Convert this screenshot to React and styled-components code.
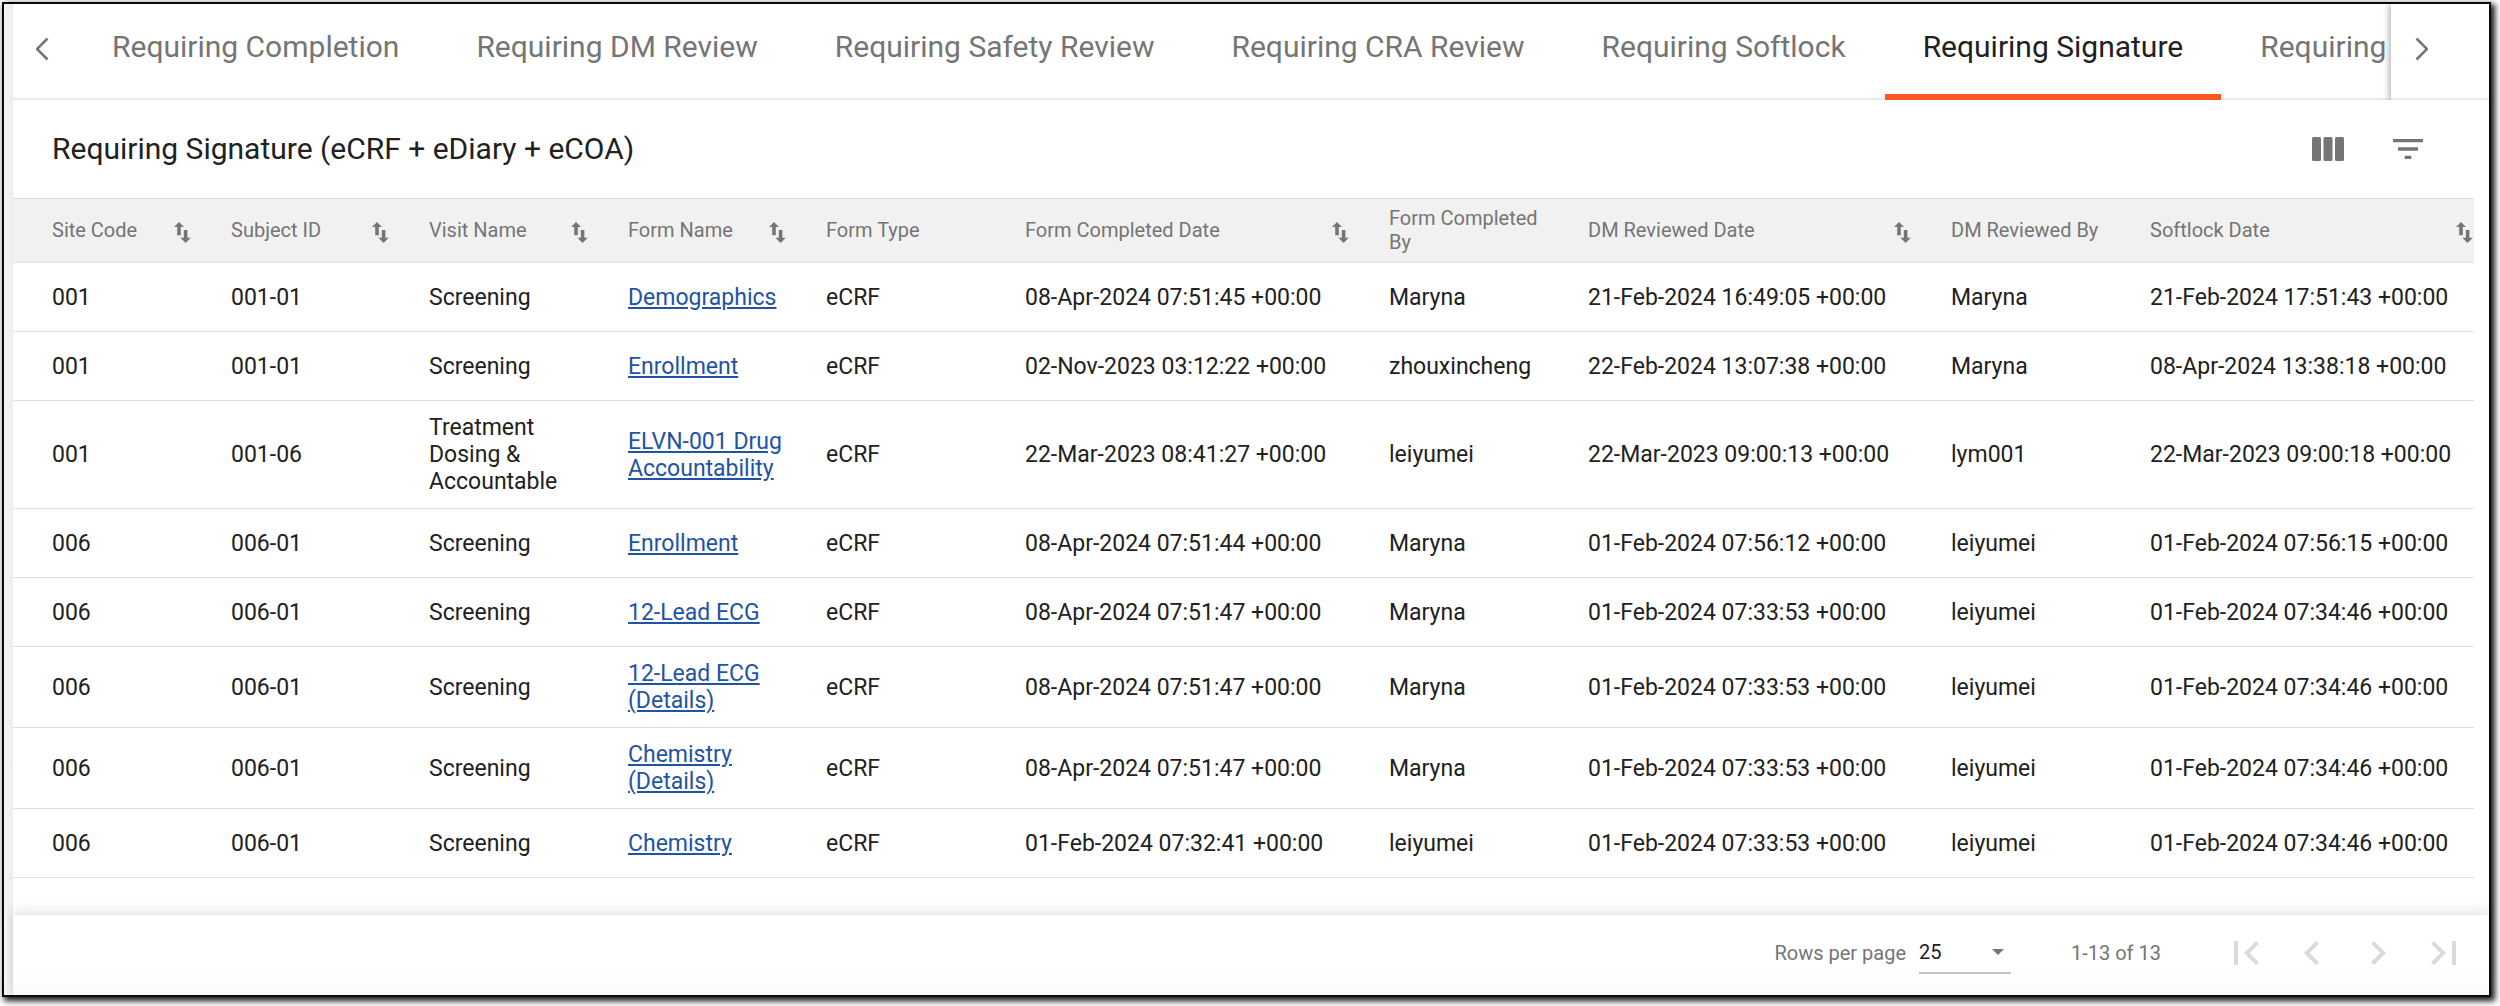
import React, { useState } from "react";
import styled, { createGlobalStyle } from "styled-components";

const GlobalStyle = createGlobalStyle`
  * { box-sizing: border-box; }
  body {
    margin: 0;
    background: #fff;
    color: #212121;
    font-family: Roboto, "Liberation Sans", sans-serif;
  }
  button, select { font: inherit; color: inherit; }
`;

const Page = styled.div`
  display: flex;
  min-height: 100vh;
  padding: 2px 9px 9px 2px;
`;

const Frame = styled.main`
  display: flex;
  flex: 1;
  min-width: 0;
  padding-left: 9px;
  border: 2px solid #0a0a0a;
  background: linear-gradient(90deg, #f8f8f8, #ececec) left / 9px 100% no-repeat #fff;
  box-shadow: 3px 3px 6px 1px rgba(0, 0, 0, 0.9);
`;

const Content = styled.div`
  display: flex;
  flex: 1;
  flex-direction: column;
  min-width: 0;
  background: #fff;
`;

const TabBar = styled.nav`
  display: flex;
  height: 96px;
  border-bottom: 2px solid #e8e8e8;
`;

const TabList = styled.div`
  display: flex;
  flex: 1;
  gap: 1px;
  min-width: 0;
  height: 96px;
  padding-left: 2px;
  overflow: hidden;
`;

const Tab = styled.button`
  flex: none;
  height: 96px;
  padding: 0 38px 4px;
  border: 0;
  border-bottom: 6px solid ${(p) => (p.$active ? "#ff5722" : "transparent")};
  background: none;
  color: ${(p) => (p.$active ? "#212121" : "#757575")};
  font-size: 30px;
  font-weight: 400;
  line-height: 36px;
  white-space: nowrap;
  cursor: pointer;
`;

const IconButton = styled.button`
  display: flex;
  flex: none;
  align-items: center;
  justify-content: center;
  padding: 0;
  border: 0;
  background: none;
  color: ${(p) => p.$color || "#757575"};
  cursor: pointer;
  svg { display: block; }
`;

const ScrollButton = styled(IconButton)`
  width: 59px;
  height: 90px;
`;

const ScrollEnd = styled.div`
  position: relative;
  display: flex;
  flex: none;
  width: 98px;
  height: 96px;
  box-shadow: -2px 0 6px rgba(0, 0, 0, 0.3);
  clip-path: inset(0 0 0 -16px);
`;

const TitleBar = styled.header`
  display: flex;
  align-items: center;
  justify-content: space-between;
  height: 98px;
  padding: 0 61px 0 39px;
`;

const Title = styled.h1`
  margin: 0;
  font-size: 30px;
  font-weight: 400;
  line-height: 36px;
`;

const Actions = styled.div`
  display: flex;
  gap: 40px;
`;

const TableArea = styled.section`
  flex: 1;
  margin-right: 15px;
  overflow: hidden;
`;

const Table = styled.table`
  width: 2500px;
  table-layout: fixed;
  border-collapse: separate;
  border-spacing: 0;
`;

const HeadCell = styled.th`
  height: 65px;
  padding: 0 40px 1px 0;
  border-top: 1px solid #e0e0e0;
  border-bottom: 1px solid #e0e0e0;
  background: #f1f1f1;
  color: #757575;
  font-size: 20px;
  font-weight: 400;
  line-height: 24px;
  text-align: left;
  &:first-child { padding-left: 39px; }
`;

const HeadContent = styled.div`
  display: flex;
  align-items: center;
  justify-content: space-between;
  white-space: ${(p) => (p.$sortable ? "nowrap" : "normal")};
`;

const Cell = styled.td`
  height: 69px;
  padding: 13px 40px 13px 0;
  border-bottom: 1px solid #e0e0e0;
  font-size: 23px;
  line-height: 27px;
  &:first-child { padding-left: 39px; }
  &.date { padding-right: 32px; white-space: nowrap; }
`;

const FormLink = styled.a`
  color: #1f53a5;
  text-decoration: underline;
`;

const Footer = styled.footer`
  display: flex;
  align-items: center;
  justify-content: flex-end;
  height: 80px;
  margin-top: 37px;
  padding: 0 21px 4px 0;
  background: linear-gradient(#fff 60%, #fbfbfb);
  box-shadow: 0 -2px 12px rgba(0, 0, 0, 0.14);
  clip-path: inset(-16px 0 0 -9px);
  color: #757575;
  font-size: 20px;
  line-height: 24px;
`;

const RowsPerPage = styled.label`
  display: flex;
  align-items: center;
  gap: 13px;
`;

const SelectBox = styled.span`
  display: flex;
  align-items: center;
  padding-right: 7px;
  border-bottom: 2px solid #c2c2c2;
`;

const Select = styled.select`
  width: 73px;
  height: 40px;
  padding: 0;
  border: 0;
  background: none;
  color: #212121;
  appearance: none;
`;

const Range = styled.span`
  margin: 0 61px 0 60px;
`;

const Pager = styled.div`
  display: flex;
  gap: 18px;
`;

const Chevron = ({ right }) => (
  <svg width="14" height="24" viewBox="0 0 14 24" fill="none" stroke="currentColor" strokeWidth="2.6" aria-hidden="true">
    <path d={right ? "M2.5 1.5L13 12L2.5 22.5" : "M11.5 1.5L1 12L11.5 22.5"} />
  </svg>
);

const ColumnsIcon = () => (
  <svg width="40" height="40" viewBox="0 0 40 40" fill="currentColor" aria-hidden="true">
    <rect x="4" y="8" width="9" height="24" rx="1.5" />
    <rect x="15.5" y="8" width="9" height="24" rx="1.5" />
    <rect x="27" y="8" width="9" height="24" rx="1.5" />
  </svg>
);

const FilterIcon = () => (
  <svg width="40" height="40" viewBox="0 0 24 24" fill="currentColor" aria-hidden="true">
    <path d="M10 18h4v-2h-4v2zM3 6v2h18V6H3zm3 7h12v-2H6v2z" />
  </svg>
);

const SortIcon = () => (
  <svg width="17" height="21" viewBox="0 0 17 21" fill="currentColor" aria-hidden="true">
    <path d="M5 0L10 5H6.8V13.3H3.2V5H0zM9.8 8H13.4V15.8H16.8L11.6 21L6.4 15.8H9.8z" />
  </svg>
);

const PAGER = [
  ["First page", "M18.41 16.59L13.82 12l4.59-4.59L17 6l-6 6 6 6zM6 6h2v12H6z"],
  ["Previous page", "M15.41 7.41L14 6l-6 6 6 6 1.41-1.41L10.83 12z"],
  ["Next page", "M10 6L8.59 7.41 13.17 12l-4.58 4.59L10 18l6-6z"],
  ["Last page", "M5.59 7.41L10.18 12l-4.59 4.59L7 18l6-6-6-6zM16 6h2v12h-2z"],
];

const SortButton = styled(IconButton)`
  margin-top: 4px;
`;

const TABS = [
  "Requiring Completion",
  "Requiring DM Review",
  "Requiring Safety Review",
  "Requiring CRA Review",
  "Requiring Softlock",
  "Requiring Signature",
  "Requiring",
];

const COLUMNS = [
  { label: "Site Code", width: 218, sortable: true },
  { label: "Subject ID", width: 198, sortable: true },
  { label: "Visit Name", width: 199, sortable: true },
  { label: "Form Name", width: 198, sortable: true },
  { label: "Form Type", width: 199 },
  { label: "Form Completed Date", width: 364, sortable: true },
  { label: "Form Completed By", width: 199 },
  { label: "DM Reviewed Date", width: 363, sortable: true },
  { label: "DM Reviewed By", width: 199 },
  { label: "Softlock Date", width: 363, sortable: true },
];

const ROWS = [
  ["001", "001-01", "Screening", "Demographics", "eCRF", "08-Apr-2024 07:51:45 +00:00", "Maryna", "21-Feb-2024 16:49:05 +00:00", "Maryna", "21-Feb-2024 17:51:43 +00:00"],
  ["001", "001-01", "Screening", "Enrollment", "eCRF", "02-Nov-2023 03:12:22 +00:00", "zhouxincheng", "22-Feb-2024 13:07:38 +00:00", "Maryna", "08-Apr-2024 13:38:18 +00:00"],
  ["001", "001-06", "Treatment Dosing & Accountable", "ELVN-001 Drug Accountability", "eCRF", "22-Mar-2023 08:41:27 +00:00", "leiyumei", "22-Mar-2023 09:00:13 +00:00", "lym001", "22-Mar-2023 09:00:18 +00:00"],
  ["006", "006-01", "Screening", "Enrollment", "eCRF", "08-Apr-2024 07:51:44 +00:00", "Maryna", "01-Feb-2024 07:56:12 +00:00", "leiyumei", "01-Feb-2024 07:56:15 +00:00"],
  ["006", "006-01", "Screening", "12-Lead ECG", "eCRF", "08-Apr-2024 07:51:47 +00:00", "Maryna", "01-Feb-2024 07:33:53 +00:00", "leiyumei", "01-Feb-2024 07:34:46 +00:00"],
  ["006", "006-01", "Screening", "12-Lead ECG (Details)", "eCRF", "08-Apr-2024 07:51:47 +00:00", "Maryna", "01-Feb-2024 07:33:53 +00:00", "leiyumei", "01-Feb-2024 07:34:46 +00:00"],
  ["006", "006-01", "Screening", "Chemistry (Details)", "eCRF", "08-Apr-2024 07:51:47 +00:00", "Maryna", "01-Feb-2024 07:33:53 +00:00", "leiyumei", "01-Feb-2024 07:34:46 +00:00"],
  ["006", "006-01", "Screening", "Chemistry", "eCRF", "01-Feb-2024 07:32:41 +00:00", "leiyumei", "01-Feb-2024 07:33:53 +00:00", "leiyumei", "01-Feb-2024 07:34:46 +00:00"],
];

export default function App() {
  const [active, setActive] = useState(5);
  return (
    <Page>
      <GlobalStyle />
      <Frame>
        <Content>
          <TabBar>
            <ScrollButton aria-label="Scroll tabs left"><Chevron /></ScrollButton>
            <TabList role="tablist">
              {TABS.map((tab, i) => (
                <Tab key={tab} role="tab" aria-selected={i === active} $active={i === active} onClick={() => setActive(i)}>
                  {tab}
                </Tab>
              ))}
            </TabList>
            <ScrollEnd>
              <ScrollButton aria-label="Scroll tabs right"><Chevron right /></ScrollButton>
            </ScrollEnd>
          </TabBar>
          <TitleBar>
            <Title>Requiring Signature (eCRF + eDiary + eCOA)</Title>
            <Actions>
              <IconButton aria-label="Columns"><ColumnsIcon /></IconButton>
              <IconButton aria-label="Filter"><FilterIcon /></IconButton>
            </Actions>
          </TitleBar>
          <TableArea>
            <Table>
              <colgroup>
                {COLUMNS.map((c) => <col key={c.label} style={{ width: c.width }} />)}
              </colgroup>
              <thead>
                <tr>
                  {COLUMNS.map((c) => (
                    <HeadCell key={c.label} scope="col">
                      <HeadContent $sortable={c.sortable}>
                        {c.label}
                        {c.sortable && <SortButton aria-label={`Sort by ${c.label}`}><SortIcon /></SortButton>}
                      </HeadContent>
                    </HeadCell>
                  ))}
                </tr>
              </thead>
              <tbody>
                {ROWS.map((row, r) => (
                  <tr key={r}>
                    {row.map((value, c) => (
                      <Cell key={c} className={COLUMNS[c].label.endsWith("Date") ? "date" : undefined}>
                        {c === 3 ? <FormLink href="#form">{value}</FormLink> : value}
                      </Cell>
                    ))}
                  </tr>
                ))}
              </tbody>
            </Table>
          </TableArea>
          <Footer>
            <RowsPerPage>
              Rows per page
              <SelectBox>
                <Select defaultValue="25">
                  <option>25</option>
                  <option>50</option>
                  <option>100</option>
                </Select>
                <svg width="12" height="6" viewBox="0 0 12 6" fill="currentColor" aria-hidden="true"><path d="M0 0h12L6 6z" /></svg>
              </SelectBox>
            </RowsPerPage>
            <Range>1-13 of 13</Range>
            <Pager>
              {PAGER.map(([label, d]) => (
                <IconButton key={label} aria-label={label} $color="#dadada">
                  <svg width="48" height="48" viewBox="0 0 24 24" fill="currentColor" aria-hidden="true"><path d={d} /></svg>
                </IconButton>
              ))}
            </Pager>
          </Footer>
        </Content>
      </Frame>
    </Page>
  );
}
